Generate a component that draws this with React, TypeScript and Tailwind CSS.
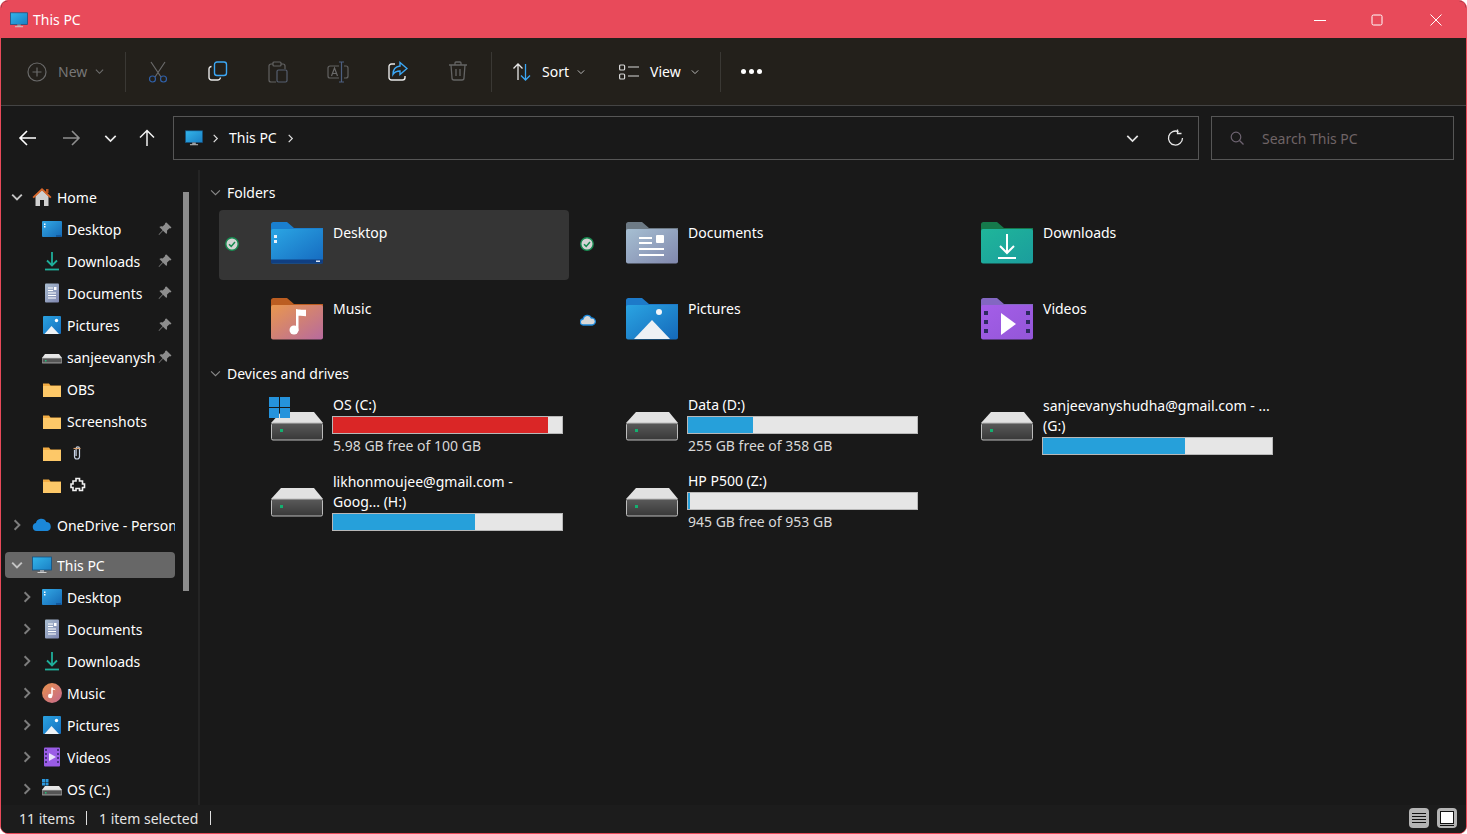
import React from "react";

const Grad = ({ id, a, b }: { id: string; a: string; b: string }) => (
  <defs>
    <linearGradient id={id} x1="0" y1="0" x2="1" y2="1">
      <stop offset="0" stopColor={a} />
      <stop offset="1" stopColor={b} />
    </linearGradient>
  </defs>
);

const Monitor = ({ w = 20 }: { w?: number }) => (
  <svg width={w} height={w} viewBox="0 0 20 20">
    <Grad id="mon" a="#33b5ea" b="#1a7fc4" />
    <rect x="0.5" y="2" width="19" height="13" fill="url(#mon)" stroke="#14507f" strokeWidth="0.8" />
    <rect x="8" y="15" width="4" height="2" fill="#9aa0a6" />
    <rect x="5.5" y="17" width="9" height="1" fill="#d0d0d0" />
  </svg>
);

const Chevron = ({ dir = "down", size = 10, color = "#9a9a9a", sw = 1.4 }: { dir?: string; size?: number; color?: string; sw?: number }) => (
  <svg width={size} height={size} viewBox="0 0 10 10" fill="none" stroke={color} strokeWidth={sw}>
    {dir === "down" ? <path d="M1 3l4 4 4-4" /> : <path d="M3 1l4 4-4 4" />}
  </svg>
);

const Home = () => (
  <svg width="20" height="20" viewBox="0 0 20 20">
    <path d="M3.5 9L10 3l6.5 6v10h-4.5v-6H8v6H3.5z" fill="#cfcfcf" />
    <path d="M0.5 10L10 1l9.5 9-1.3 1.2L10 3.6 1.8 11.200z" fill="#d9672b" />
    <rect x="14" y="2" width="2.500" height="4" fill="#b9541f" />
  </svg>
);

const DesktopSmall = () => (
  <svg width="20" height="20" viewBox="0 0 20 20">
    <Grad id="ds" a="#33a9e6" b="#1569b5" />
    <rect x="0" y="2" width="20" height="16" rx="1" fill="url(#ds)" />
    <rect x="2" y="4.500" width="1.500" height="1.500" fill="#fff" />
    <rect x="2" y="7" width="1.500" height="1.500" fill="#fff" />
    <rect x="14" y="16.500" width="5" height="1" fill="#0e3f7a" />
  </svg>
);

const DownloadSmall = () => (
  <svg width="20" height="20" viewBox="0 0 20 20" fill="none" stroke="#1fae9a" strokeWidth="1.800">
    <path d="M10 1v13M5 9.500l5 5 5-5" />
    <path d="M3 18.500h14" />
  </svg>
);

const DocSmall = () => (
  <svg width="20" height="20" viewBox="0 0 20 20">
    <Grad id="doc" a="#a9bdd0" b="#7f86b0" />
    <rect x="3" y="0.500" width="14" height="19" rx="1" fill="url(#doc)" />
    <path d="M6 5h5M6 7.500h5M6 10h8M6 12.500h8M6 15h8" stroke="#fff" strokeWidth="1" />
    <rect x="12" y="4" width="2.500" height="3" fill="#fff" />
  </svg>
);

const PicSmall = () => (
  <svg width="20" height="20" viewBox="0 0 20 20">
    <Grad id="pic" a="#2aa2e0" b="#1570c0" />
    <rect x="1" y="1" width="18" height="18" rx="1" fill="url(#pic)" />
    <circle cx="14.500" cy="5.500" r="1.700" fill="#fff" />
    <path d="M2.500 19l7-8 7.500 8z" fill="#eef2f5" />
  </svg>
);

const DriveSmall = ({ logo }: { logo?: boolean }) => (
  <svg width="20" height="20" viewBox="0 0 20 20">
    <path d="M3 7h14l3 4H0z" fill="#e6e6e6" />
    <rect x="0" y="11" width="20" height="5" rx="0.500" fill="#555" stroke="#c9c9c9" strokeWidth="0.700" />
    <rect x="3" y="13" width="1.500" height="1.500" fill="#22c07a" />
    {logo && (
      <g fill="#2a97dc">
        <rect x="0" y="0" width="3" height="3" />
        <rect x="3.500" y="0" width="3" height="3" />
        <rect x="0" y="3.500" width="3" height="3" />
        <rect x="3.500" y="3.500" width="3" height="3" />
      </g>
    )}
  </svg>
);

const SmallFolder = () => (
  <svg width="20" height="20" viewBox="0 0 20 20">
    <path d="M1 4.500h6l1.500 2H19v11H1z" fill="#f2ac43" />
    <rect x="1" y="7" width="18" height="11" fill="#fdc868" />
  </svg>
);

const Cloud = ({ w = 20, fill = "#1b87d8" }: { w?: number; fill?: string }) => (
  <svg width={w} height={w} viewBox="0 0 20 20">
    <path d="M4.500 16a4 4 0 0 1-.6-7.900A5.500 5.500 0 0 1 14.300 7a4.600 4.600 0 0 1 1.200 9z" fill={fill} />
  </svg>
);

const Music = () => (
  <svg width="20" height="20" viewBox="0 0 20 20">
    <Grad id="mus" a="#e9924b" b="#c4688f" />
    <circle cx="10" cy="10" r="10" fill="url(#mus)" />
    <path d="M10 4.500v8" stroke="#fff" strokeWidth="1.500" />
    <path d="M10 4.500c1 1.500 3 1 3.500 2.800-1.200-.8-2.500-.5-3.500-.6z" fill="#fff" />
    <circle cx="8.200" cy="13" r="2.200" fill="#fff" />
  </svg>
);

const Video = () => (
  <svg width="20" height="20" viewBox="0 0 20 20">
    <rect x="2" y="0.500" width="16" height="19" rx="1" fill="#9a5ce6" />
    <path d="M4 2v16M16 2v16" stroke="#2f2560" strokeWidth="1.500" strokeDasharray="2 2" />
    <path d="M7 6l7 4-7 4z" fill="#e8e0fa" />
  </svg>
);

const Pin = () => (
  <svg width="14" height="14" viewBox="0 0 14 14" fill="#8d8d8d">
    <path d="M8.500 0.500l5 5-1.200 1-0.900-.3-2.500 2.600c.5 1.400.2 2.500-.5 3.200L5 8.800 1 13l-.4-.4L4.600 8.300 1.400 5c.8-.8 2-1 3.200-.5l2.600-2.500-.2-.9z" />
  </svg>
);

type Nav = { label: string; icon: React.ReactNode; level: number; chev?: string; pin?: boolean; sel?: boolean; gap?: boolean; extra?: React.ReactNode };

const navItems: Nav[] = [
  { label: "Home", icon: <Home />, level: 0, chev: "down" },
  { label: "Desktop", icon: <DesktopSmall />, level: 1, pin: true },
  { label: "Downloads", icon: <DownloadSmall />, level: 1, pin: true },
  { label: "Documents", icon: <DocSmall />, level: 1, pin: true },
  { label: "Pictures", icon: <PicSmall />, level: 1, pin: true },
  { label: "sanjeevanyshudha@gmail.com", icon: <DriveSmall />, level: 1, pin: true },
  { label: "OBS", icon: <SmallFolder />, level: 1 },
  { label: "Screenshots", icon: <SmallFolder />, level: 1 },
  {
    label: "",
    icon: <SmallFolder />,
    level: 1,
    extra: (
      <svg width="12" height="16" viewBox="0 0 12 16" fill="none" stroke="#c9d4e6" strokeWidth="1.200" className="ml-1">
        <path d="M3.500 5v6.500a2.500 2.500 0 0 0 5 0V3.500a1.700 1.700 0 0 0-3.400 0V11" />
        <path d="M2.500 3.500h7" stroke="#d8a070" />
      </svg>
    ),
  },
  {
    label: "",
    icon: <SmallFolder />,
    level: 1,
    extra: (
      <svg width="16" height="16" viewBox="0 0 16 16" fill="none" stroke="#f0f0f0" strokeWidth="1.600" className="ml-[3px]">
        <path d="M6 1.500h3.500v2.500h3v3h2v3.500h-2v3h-3v-2H6v2H3v-3H1V7h2V4h3z" />
      </svg>
    ),
  },
  { label: "OneDrive - Personal", icon: <Cloud />, level: 0, chev: "right", gap: true },
  { label: "This PC", icon: <Monitor />, level: 0, chev: "down", sel: true, gap: true },
  { label: "Desktop", icon: <DesktopSmall />, level: 1, chev: "right" },
  { label: "Documents", icon: <DocSmall />, level: 1, chev: "right" },
  { label: "Downloads", icon: <DownloadSmall />, level: 1, chev: "right" },
  { label: "Music", icon: <Music />, level: 1, chev: "right" },
  { label: "Pictures", icon: <PicSmall />, level: 1, chev: "right" },
  { label: "Videos", icon: <Video />, level: 1, chev: "right" },
  { label: "OS (C:)", icon: <DriveSmall logo />, level: 1, chev: "right" },
];

const NavRow = ({ item }: { item: Nav }) => (
  <div className={item.gap ? "mt-2 flex h-8 shrink-0 items-center" : "flex h-8 shrink-0 items-center"}>
    <div className={item.sel ? "ml-1 flex h-[26px] w-[170px] items-center rounded-sm bg-[#676767]" : "ml-1 flex h-[26px] w-[170px] items-center"}>
      <div className={item.level === 1 ? "ml-[10px] flex w-6 shrink-0 justify-center" : "flex w-6 shrink-0 justify-center"}>
        {item.chev && <Chevron dir={item.chev} size={12} color={item.sel || item.chev === "down" ? "#c4c4c4" : "#7d7d7d"} sw={1.600} />}
      </div>
      <div className="ml-[3px] flex w-5 shrink-0 justify-center">{item.icon}</div>
      <div className="ml-[5px] min-w-0 flex-1 overflow-hidden whitespace-nowrap text-white">{item.label || item.extra}</div>
      {item.pin && (
        <div className="flex w-5 shrink-0 justify-center">
          <Pin />
        </div>
      )}
    </div>
  </div>
);

const FolderIcon = ({ id, tab, a, b, children }: { id: string; tab: string; a: string; b: string; children?: React.ReactNode }) => (
  <svg width="52" height="42" viewBox="0 0 52 42" className="shrink-0">
    <Grad id={id} a={a} b={b} />
    <path d="M0 2.500A2.500 2.500 0 0 1 2.500 0h13.500l7 6h29v12H0z" fill={tab} />
    <rect x="0" y="7" width="52" height="34.500" rx="2" fill={`url(#${id})`} />
    {children}
  </svg>
);

const icons: Record<string, React.ReactNode> = {
  Desktop: (
    <FolderIcon id="fdesk" tab="#1a7fcf" a="#2ba6e4" b="#1569bf">
      <rect x="3" y="13" width="3" height="3" fill="#e8f2fa" />
      <rect x="3" y="18" width="3" height="3" fill="#e8f2fa" />
      <rect x="0" y="37.500" width="52" height="4" fill="#103f82" />
      <rect x="45" y="38.500" width="4" height="1.500" fill="#dbe6f5" />
    </FolderIcon>
  ),
  Documents: (
    <FolderIcon id="fdoc" tab="#6d7a85" a="#a6bfd2" b="#8188ad">
      <g fill="#fff">
        <rect x="13" y="15" width="13" height="2" />
        <rect x="13" y="20" width="13" height="2" />
        <rect x="13" y="26" width="25" height="2" />
        <rect x="13" y="32" width="25" height="2" />
        <rect x="30" y="13" width="8" height="8" rx="1" />
      </g>
    </FolderIcon>
  ),
  Downloads: (
    <FolderIcon id="fdown" tab="#15794b" a="#1fb69a" b="#1b9d9d">
      <path d="M26 12v19M19 24l7 7 7-7" stroke="#fff" strokeWidth="2" fill="none" />
      <rect x="17" y="35" width="18" height="2" fill="#fff" />
    </FolderIcon>
  ),
  Music: (
    <FolderIcon id="fmus" tab="#bb5d21" a="#e9974e" b="#b76a9e">
      <rect x="25" y="13" width="2.500" height="20" fill="#fff" />
      <path d="M25 11c3 1 8 .5 10 .8v6.500c-3-.8-7-.8-10-.3z" fill="#fff" />
      <circle cx="23" cy="32" r="4.500" fill="#fff" />
    </FolderIcon>
  ),
  Pictures: (
    <FolderIcon id="fpic" tab="#1d7ac9" a="#2aa4e2" b="#1569ba">
      <circle cx="33" cy="14" r="3" fill="#f3f6f9" />
      <path d="M8 41L26 22l18 19z" fill="#eef1f4" />
    </FolderIcon>
  ),
  Videos: (
    <FolderIcon id="fvid" tab="#8367c2" a="#a45ee8" b="#9356d8">
      <path d="M5 13v26M47 13v26" stroke="#2c2a60" strokeWidth="4" strokeDasharray="4 5" />
      <path d="M20 15l15 11-15 11z" fill="#fff" />
    </FolderIcon>
  ),
};

const CheckBadge = () => (
  <svg width="14" height="14" viewBox="0 0 14 14">
    <circle cx="7" cy="7" r="6.200" fill="#d4d4d4" stroke="#178a50" strokeWidth="1.400" />
    <path d="M4 7.200l2.200 2.200L10 5" stroke="#178a50" strokeWidth="1.500" fill="none" />
  </svg>
);

const CloudBadge = () => (
  <svg width="16" height="14" viewBox="0 0 16 14">
    <path d="M3.500 12a3 3 0 0 1-.4-6A4.300 4.300 0 0 1 11.300 5a3.500 3.500 0 0 1 1 7z" fill="#d8d8d8" stroke="#1a86d8" strokeWidth="1.300" />
  </svg>
);

const Tile = ({ name, sel, badge }: { name: string; sel?: boolean; badge?: React.ReactNode }) => (
  <div className={sel ? "flex h-[70px] rounded-sm bg-[#353535] pt-3" : "flex h-[70px] pt-3"}>
    <div className="flex h-[44px] w-[52px] shrink-0 items-center pl-[6px]">{badge}</div>
    {icons[name]}
    <div className="ml-[10px] mt-px leading-5 text-white">{name}</div>
  </div>
);

const DriveIcon = ({ logo }: { logo?: boolean }) => (
  <svg width="52" height="44" viewBox="0 0 52 44" className="mt-[2px] shrink-0 overflow-visible">
    <defs>
      <linearGradient id="hdd" x1="0" y1="0" x2="0" y2="1">
        <stop offset="0" stopColor="#5a5a5a" />
        <stop offset="1" stopColor="#383838" />
      </linearGradient>
    </defs>
    <path d="M10 15h33l9 11H0z" fill="#e2e2e2" />
    <rect x="0.500" y="26" width="51" height="17" rx="1.500" fill="url(#hdd)" stroke="#bcbcbc" strokeWidth="1" />
    <rect x="9" y="32" width="3" height="3" fill="#14b070" />
    {logo && (
      <g fill="#2593dc">
        <rect x="-2" y="0" width="10" height="10" />
        <rect x="9" y="0" width="10" height="10" />
        <rect x="-2" y="11" width="10" height="10" />
        <rect x="9" y="11" width="10" height="10" />
      </g>
    )}
  </svg>
);

const drives = [
  { lines: ["OS (C:)"], pct: 94, color: "bg-[#da2626]", free: "5.98 GB free of 100 GB", logo: true },
  { lines: ["Data (D:)"], pct: 28.500, color: "bg-[#26a0da]", free: "255 GB free of 358 GB" },
  { lines: ["sanjeevanyshudha@gmail.com - ...", "(G:)"], pct: 62, color: "bg-[#26a0da]" },
  { lines: ["likhonmoujee@gmail.com -", "Goog... (H:)"], pct: 62, color: "bg-[#26a0da]" },
  { lines: ["HP P500 (Z:)"], pct: 1, color: "bg-[#26a0da]", free: "945 GB free of 953 GB" },
];

const SectionHead = ({ label }: { label: string }) => (
  <div className="flex h-5 items-center text-white">
    <div className="ml-[10px] flex w-[17px] shrink-0 items-center">
      <Chevron size={11} color="#8a8a8a" sw={1} />
    </div>
    {label}
  </div>
);

const ToolIcon = ({ children }: { children: React.ReactNode }) => <div className="flex w-[60px] shrink-0 justify-center">{children}</div>;

const Sep = () => <div className="h-10 w-px shrink-0 bg-[#3a3834]" />;

export default function App() {
  return (
    <div
      className="flex h-screen w-screen flex-col overflow-hidden rounded-lg border border-[#e84a5a] bg-[#191919] text-[14px]"
      style={{ fontFamily: '"Noto Sans", sans-serif' }}
    >
      {/* title bar */}
      <div className="flex h-[37px] shrink-0 items-center bg-[#e84a5a] pl-[9px] text-white">
        <Monitor w={18} />
        <span className="ml-[5px]">This PC</span>
        <div className="ml-auto flex items-center">
          <div className="flex w-[57px] justify-center">
            <svg width="12" height="12" viewBox="0 0 12 12" stroke="#fff" strokeWidth="1"><path d="M0 6.500h12" /></svg>
          </div>
          <div className="flex w-[58px] justify-center">
            <svg width="12" height="12" viewBox="0 0 12 12" fill="none" stroke="#fff" strokeWidth="1"><rect x="1" y="1" width="10" height="10" rx="1.500" /></svg>
          </div>
          <div className="flex w-[60px] justify-center">
            <svg width="12" height="12" viewBox="0 0 12 12" stroke="#fff" strokeWidth="1"><path d="M0.500 0.500l11 11M11.500 0.500l-11 11" /></svg>
          </div>
        </div>
      </div>

      {/* toolbar */}
      <div className="flex h-[68px] shrink-0 items-center border-b border-[#444] bg-[#23201b] text-white">
        <div className="ml-[26px] flex w-[98px] items-center text-[#777]">
          <svg width="20" height="20" viewBox="0 0 20 20" fill="none" stroke="#6a6a6a" strokeWidth="1.200">
            <circle cx="10" cy="10" r="9" />
            <path d="M10 5.500v9M5.500 10h9" />
          </svg>
          <span className="ml-[11px]">New</span>
          <span className="ml-2"><Chevron size={9} color="#6f6f6f" sw={1.200} /></span>
        </div>
        <Sep />
        <div className="ml-[2px] flex">
          <ToolIcon>
            <svg width="20" height="22" viewBox="0 0 20 22" fill="none" strokeWidth="1.200">
              <path d="M3 1l10 15M17 1L7 16" stroke="#6a6a6a" />
              <circle cx="4.500" cy="18" r="3" stroke="#2f5fa8" />
              <circle cx="15.500" cy="18" r="3" stroke="#2f5fa8" />
            </svg>
          </ToolIcon>
          <ToolIcon>
            <svg width="20" height="20" viewBox="0 0 20 20" fill="none" strokeWidth="1.400">
              <path d="M3.500 5.500A2.500 2.500 0 0 0 1 8v8.500A2.500 2.500 0 0 0 3.500 19h6a3 3 0 0 0 3-2.500" stroke="#e8e8e8" />
              <rect x="6.500" y="1" width="12" height="13.500" rx="2.500" stroke="#3ba7f5" />
            </svg>
          </ToolIcon>
          <ToolIcon>
            <svg width="20" height="22" viewBox="0 0 20 22" fill="none" stroke="#626262" strokeWidth="1.200">
              <path d="M5 3H3a2 2 0 0 0-2 2v14a2 2 0 0 0 2 2h5M13 3h2a2 2 0 0 1 2 2v3" />
              <rect x="5" y="1" width="8" height="4" rx="1" />
              <rect x="9" y="9" width="10" height="12" rx="1.500" stroke="#565f70" />
            </svg>
          </ToolIcon>
          <ToolIcon>
            <svg width="22" height="22" viewBox="0 0 22 22" fill="none" stroke="#626262" strokeWidth="1.200">
              <path d="M12 5H3a2 2 0 0 0-2 2v8a2 2 0 0 0 2 2h9M17 5h2a2 2 0 0 1 2 2v8a2 2 0 0 1-2 2h-2" />
              <path d="M12 1h5M12 21h5M14.500 1v20" stroke="#4d5f80" />
              <path d="M4.500 15l3-8 3 8M5.500 12.500h4" stroke="#6a6a6a" />
            </svg>
          </ToolIcon>
          <ToolIcon>
            <svg width="20" height="20" viewBox="0 0 20 20" fill="none" strokeWidth="1.400">
              <path d="M7 3H3.500A2.500 2.500 0 0 0 1 5.500v11A2.500 2.500 0 0 0 3.500 19h11a2.500 2.500 0 0 0 2.500-2.500V15" stroke="#e8e8e8" />
              <path d="M12 1.500l7 6-7 6v-3.500c-3.500 0-5.500 1-7 3.500 0-5 2.500-8 7-8.500z" stroke="#3ba7f5" />
            </svg>
          </ToolIcon>
          <ToolIcon>
            <svg width="20" height="20" viewBox="0 0 20 20" fill="none" stroke="#646464" strokeWidth="1.300">
              <path d="M1 4h18M7 4V2a1 1 0 0 1 1-1h4a1 1 0 0 1 1 1v2M3 4l1 13a2 2 0 0 0 2 2h8a2 2 0 0 0 2-2l1-13M8 8v7M12 8v7" />
            </svg>
          </ToolIcon>
        </div>
        <div className="ml-[3px]"><Sep /></div>
        <div className="ml-5 flex items-center">
          <svg width="20" height="20" viewBox="0 0 20 20" fill="none" strokeWidth="1.300">
            <path d="M6 18V2M1.500 6.500L6 2l4.500 4.500" stroke="#e8e8e8" />
            <path d="M13.500 2v16M9 13.500l4.500 4.500 4.500-4.500" stroke="#3ba7f5" />
          </svg>
          <span className="ml-[10px]">Sort</span>
          <span className="ml-[8px]"><Chevron size={8} color="#bdbdbd" sw={1.200} /></span>
        </div>
        <div className="ml-[34px] flex items-center">
          <svg width="20" height="16" viewBox="0 0 20 16" fill="none" stroke="#d8d8d8" strokeWidth="1.200">
            <rect x="0.600" y="1" width="5" height="5" rx="1" />
            <rect x="0.600" y="10" width="5" height="5" rx="1" />
            <path d="M9 3h11M9 12h11" />
          </svg>
          <span className="ml-[11px]">View</span>
          <span className="ml-[10px]"><Chevron size={8} color="#bdbdbd" sw={1.200} /></span>
        </div>
        <div className="ml-[21px]"><Sep /></div>
        <div className="ml-5 flex gap-[3px]">
          <div className="h-[5px] w-[5px] rounded-full bg-white" />
          <div className="h-[5px] w-[5px] rounded-full bg-white" />
          <div className="h-[5px] w-[5px] rounded-full bg-white" />
        </div>
      </div>

      {/* address row */}
      <div className="flex h-[64px] shrink-0 items-center text-white">
        <div className="ml-[17px] flex w-[155px] items-center">
          <svg width="20" height="18" viewBox="0 0 20 18" fill="none" stroke="#fff" strokeWidth="1.600"><path d="M18 9H2M9 2L2 9l7 7" /></svg>
          <span className="ml-[23px]">
            <svg width="20" height="18" viewBox="0 0 20 18" fill="none" stroke="#8f8f8f" strokeWidth="1.600"><path d="M2 9h16M11 2l7 7-7 7" /></svg>
          </span>
          <span className="ml-[23px]"><Chevron size={13} color="#e8e8e8" sw={1.300} /></span>
          <span className="ml-[22px]">
            <svg width="16" height="18" viewBox="0 0 16 18" fill="none" stroke="#f2f2f2" strokeWidth="1.500"><path d="M8 17V1.500M1 8.500l7-7 7 7" /></svg>
          </span>
        </div>
        <div className="flex h-[44px] w-[1026px] items-center border border-[#565656] pl-[11px]">
          <Monitor w={18} />
          <span className="ml-[8px]"><Chevron dir="right" size={9} color="#e0e0e0" sw={1.300} /></span>
          <span className="-mt-px ml-[9px]">This PC</span>
          <span className="ml-[9px]"><Chevron dir="right" size={9} color="#e0e0e0" sw={1.300} /></span>
          <span className="ml-auto"><Chevron size={13} color="#e0e0e0" sw={1.300} /></span>
          <span className="ml-[28px] mr-[14px]">
            <svg width="17" height="18" viewBox="0 0 17 18" fill="none" stroke="#e8e8e8" strokeWidth="1.300">
              <path d="M11.500 2.700A7 7 0 1 0 15.500 9" />
              <path d="M10.500 0.500v4h4" />
            </svg>
          </span>
        </div>
        <div className="ml-3 flex h-[44px] w-[243px] items-center border border-[#565656] pl-[18px] text-[#6f6466]">
          <svg width="14" height="14" viewBox="0 0 14 14" fill="none" stroke="#6d6370" strokeWidth="1.200">
            <circle cx="6" cy="6" r="4.800" />
            <path d="M9.500 9.500l4 4" />
          </svg>
          <span className="ml-[18px]">Search This PC</span>
        </div>
      </div>

      {/* main */}
      <div className="flex min-h-0 flex-1">
        <div className="flex w-[199px] shrink-0 border-r-2 border-[#242424]">
          <div className="flex w-[181px] shrink-0 flex-col overflow-hidden pt-[11px]">
            {navItems.map((item, i) => (
              <NavRow key={i} item={item} />
            ))}
          </div>
          <div className="ml-px mt-[22px] h-[399px] w-[6px] bg-[#8c8c8c]" />
        </div>

        <div className="min-w-0 flex-1 pt-3">
          <SectionHead label="Folders" />
          <div className="ml-[19px] mt-2 grid grid-cols-[350px_350px_350px] gap-x-[5px] gap-y-[6px]">
            <Tile name="Desktop" sel badge={<CheckBadge />} />
            <Tile name="Documents" badge={<CheckBadge />} />
            <Tile name="Downloads" />
            <Tile name="Music" />
            <Tile name="Pictures" badge={<CloudBadge />} />
            <Tile name="Videos" />
          </div>
          <div className="mt-[7px]">
            <SectionHead label="Devices and drives" />
          </div>
          <div className="ml-[19px] mt-[3px] grid grid-cols-[350px_350px_350px] gap-x-[5px]">
            {drives.map((d, i) => (
              <div key={i} className="flex h-[76px] pl-[52px] pt-[9px]">
                <DriveIcon logo={d.logo} />
                <div className={d.lines.length > 1 ? "ml-[10px] mt-px leading-5 text-white" : "ml-[10px] leading-5 text-white"}>
                  {d.lines.map((l) => (
                    <div key={l} className="whitespace-nowrap">{l}</div>
                  ))}
                  <div className="-ml-px mt-px h-[18px] w-[231px] border border-[#b8b8b8] bg-[#e6e6e6]">
                    <div className={`h-full ${d.color}`} style={{ width: `${d.pct}%` }} />
                  </div>
                  {d.free && <div className="mt-[2px] text-[#d8d8d8]">{d.free}</div>}
                </div>
              </div>
            ))}
          </div>
        </div>
      </div>

      {/* status bar */}
      <div className="flex h-[28px] shrink-0 items-center bg-[#1c1c1c] pb-[2px] text-[#e4e4e4]">
        <span className="ml-[18px]">11 items</span>
        <div className="ml-[11px] h-[14px] w-px bg-[#e0e0e0]" />
        <span className="ml-3">1 item selected</span>
        <div className="ml-3 h-[14px] w-px bg-[#e0e0e0]" />
        <div className="ml-auto mr-[9px] flex gap-2">
          <div className="flex h-5 w-5 flex-col items-center justify-center gap-[2px] rounded-sm bg-[#b4b4b4]">
            <div className="h-px w-[14px] bg-[#111]" />
            <div className="h-px w-[14px] bg-[#111]" />
            <div className="h-px w-[14px] bg-[#111]" />
            <div className="h-px w-[14px] bg-[#111]" />
          </div>
          <div className="flex h-5 w-5 flex-col items-center justify-center rounded-sm bg-[#b4b4b4]">
            <div className="h-[13px] w-[14px] border border-[#111] bg-white" />
            <div className="mt-px h-px w-[14px] bg-[#111]" />
          </div>
        </div>
      </div>
    </div>
  );
}
